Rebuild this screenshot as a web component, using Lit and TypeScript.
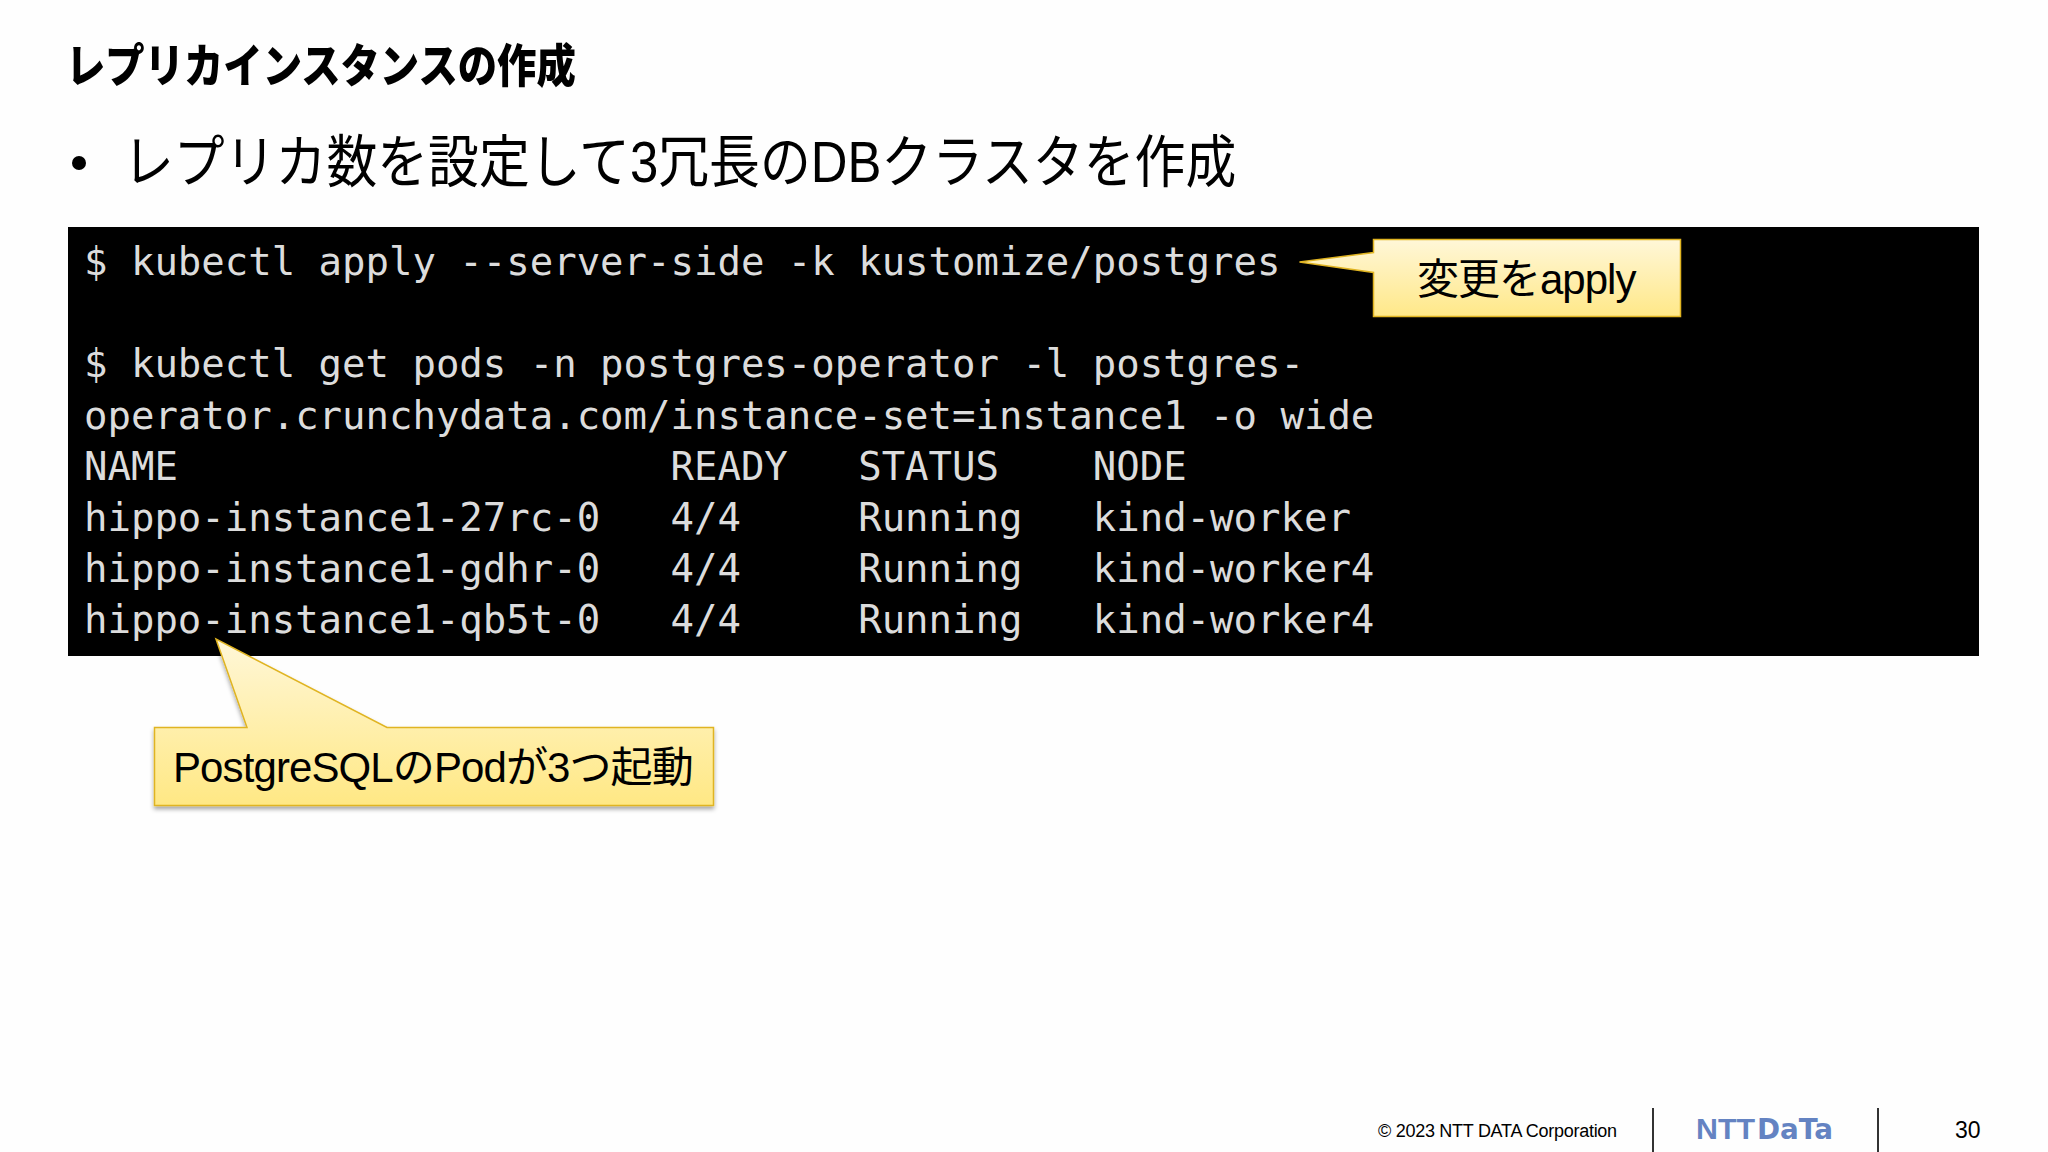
import { LitElement, html, css } from "lit";
import { customElement } from "lit/decorators.js";

const CODE = `$ kubectl apply --server-side -k kustomize/postgres

$ kubectl get pods -n postgres-operator -l postgres-
operator.crunchydata.com/instance-set=instance1 -o wide
NAME                     READY   STATUS    NODE
hippo-instance1-27rc-0   4/4     Running   kind-worker
hippo-instance1-gdhr-0   4/4     Running   kind-worker4
hippo-instance1-qb5t-0   4/4     Running   kind-worker4`;

@customElement("app-root")
export class AppRoot extends LitElement {
  static styles = css`
    :host { display: block; width: 2048px; height: 1152px; background: #fefefe; color: #000; overflow: hidden;
      font-family: "Liberation Sans", "Noto Sans CJK JP", sans-serif; }
    .slide { width: 2048px; height: 1152px; display: flex; flex-direction: column; position: relative; }
    .title { margin: 36px 0 0 66px; height: 60px; line-height: 60px; font-size: 46px; font-weight: 800; white-space: nowrap; }
    .title span { display: inline-block; transform: scaleX(.855); transform-origin: left center; }
    .bullet { margin: 27px 0 0 72px; height: 78px; display: flex; align-items: center; gap: 37px; white-space: nowrap; }
    .dot { width: 14px; height: 14px; border-radius: 50%; background: #000; flex: none; margin-top: 2px; }
    .btext { display: inline-block; font-size: 57px; line-height: 78px; transform: scaleX(.892); transform-origin: left center; }
    .term { margin: 26px 69px 0 68px; height: 429px; background: #000; box-sizing: border-box; padding: 9px 16px 0; }
    pre { margin: 0; font-family: "DejaVu Sans Mono", monospace; font-size: 39px; line-height: 51.2px; letter-spacing: -0.02px; color: #dcdcdc; }
    .spacer { flex: 1; }
    .footer { height: 44px; display: flex; align-items: center; }
    .copy { margin: 2px 0 0 1378px; width: 274px; font-size: 18px; white-space: nowrap; letter-spacing: -0.28px; }
    .rule { width: 2px; height: 44px; background: #333; flex: none; }
    .logo { width: 223px; height: 44px; display: block; flex: none; }
    .logo text { fill: #6483c2; font-weight: 700; }
    .logo .n { font-family: "Liberation Sans", sans-serif; font-size: 29px; }
    .logo .d { font-family: "DejaVu Sans", sans-serif; font-size: 28px; }
    .num { margin-left: 76px; font-size: 23px; }
    .callout { position: absolute; }
    .callout svg { position: absolute; left: 0; top: 0; overflow: visible; }
    .label { position: absolute; color: #000; white-space: nowrap; font-size: 42px; line-height: 50px; }
    .c1 { left: 1299px; top: 239px; width: 382px; height: 78px; }
    .c1 .label { left: 118px; top: 16px; letter-spacing: -1px; }
    .c2 { left: 154px; top: 639px; width: 560px; height: 167px; }
    .c2 .label { left: 19px; top: 104px; letter-spacing: -0.9px; }
  `;

  render() {
    return html`<div class="slide">
      <div class="title"><span>レプリカインスタンスの作成</span></div>
      <div class="bullet"><span class="dot"></span><span class="btext">レプリカ数を設定して3冗長のDBクラスタを作成</span></div>
      <div class="term"><pre>${CODE}</pre></div>
      <div class="spacer"></div>
      <div class="footer">
        <span class="copy">© 2023 NTT DATA Corporation</span>
        <span class="rule"></span>
        <svg class="logo" viewBox="0 0 223 44" width="223" height="44">
          <text class="n" x="42" y="31" textLength="59" lengthAdjust="spacingAndGlyphs">NTT</text>
          <text class="d" x="103" y="31" textLength="76" lengthAdjust="spacingAndGlyphs">DaTa</text>
        </svg>
        <span class="rule"></span>
        <span class="num">30</span>
      </div>

      <div class="callout c1">
        <svg width="382" height="78" viewBox="0 0 382 78">
          <defs><linearGradient id="g1" x1="0" y1="0" x2="0" y2="1">
            <stop offset="0" stop-color="#fff7d8"/><stop offset="1" stop-color="#ffe888"/>
          </linearGradient></defs>
          <path d="M74.500 .5H381.500V77.500H74.500V33.500L.5 23 74.500 13.500Z" fill="url(#g1)" stroke="#e0b422" stroke-width="1.500"/>
        </svg>
        <span class="label">変更をapply</span>
      </div>

      <div class="callout c2">
        <svg width="560" height="167" viewBox="0 0 560 167">
          <defs>
            <linearGradient id="g2" x1="0" y1="0" x2="0" y2="1">
              <stop offset="0" stop-color="#fff7d8"/><stop offset="1" stop-color="#ffe884"/>
            </linearGradient>
            <filter id="s2" x="-5%" y="-5%" width="110%" height="115%"><feDropShadow dx="0" dy="3" stdDeviation="2" flood-color="#000" flood-opacity=".35"/></filter>
          </defs>
          <path d="M62 0L93 88.500H0.500V166.500H559.500V88.500H233Z" fill="url(#g2)" stroke="#e0b422" stroke-width="1.500" filter="url(#s2)"/>
        </svg>
        <span class="label">PostgreSQLのPodが3つ起動</span>
      </div>
    </div>`;
  }
}
